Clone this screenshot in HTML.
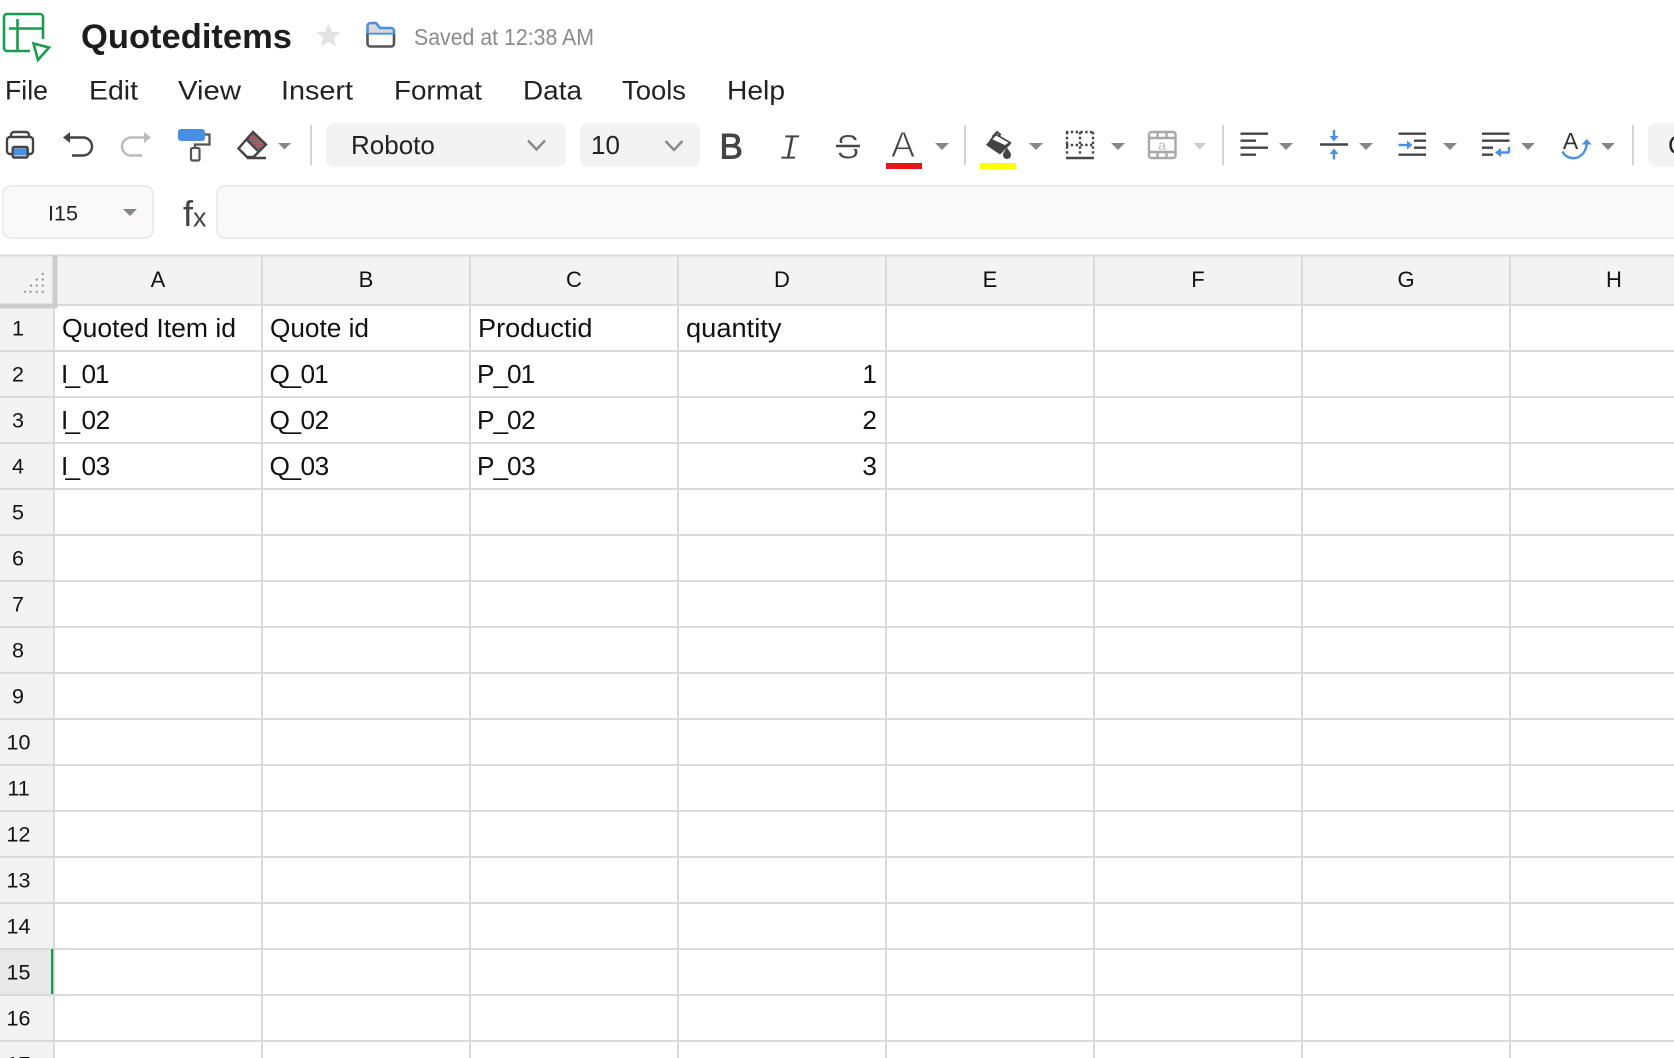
<!DOCTYPE html>
<html lang="en"><head><meta charset="utf-8"><title>Quoteditems</title>
<style>
html,body{margin:0;padding:0;background:#fff;width:1674px;height:1058px;overflow:hidden}
svg{display:block;font-family:"Liberation Sans",sans-serif}
.m{font-size:27px;fill:#222}
.h{font-size:22px;fill:#111;text-anchor:middle}
.r{font-size:21.5px;fill:#111;text-anchor:middle}
.c{font-size:26.2px;fill:#111}
.e{text-anchor:end}
.t{fill:#8b8686}
.g{fill:none;stroke:#dadada;stroke-width:2}
.i{fill:none;stroke:#444;stroke-width:2.4}
.b{fill:none;stroke:#4a90e2;stroke-width:2.4}
</style></head><body>
<svg width="1674" height="1058" viewBox="0 0 1674 1058" xmlns="http://www.w3.org/2000/svg">
<defs>
<pattern id="rd" width="3" height="3" patternUnits="userSpaceOnUse"><rect width="3" height="3" fill="#777"/><rect width="1.4" height="1.4" fill="#f0202a"/></pattern>
</defs>
<!-- logo -->
<g fill="none" stroke="#1a9c4f" stroke-width="2.6">
<path d="M30 51H7a3 3 0 0 1-3-3V17a3 3 0 0 1 3-3H40a3 3 0 0 1 3 3V39"/>
<path d="M9 28.5H43M17.5 19V51"/>
<path d="M33.5 43.5L49 47.5L38 60Z"/>
</g>
<text x="81" y="48" font-size="34.5" font-weight="700" fill="#1d1d1d" textLength="211" lengthAdjust="spacingAndGlyphs">Quoteditems</text>
<polygon points="328.5,23 331.7,31.6 340.9,32 333.7,37.7 336.1,46.5 328.5,41.5 320.9,46.5 323.3,37.7 316.1,32 325.3,31.6" fill="#e2e2e2"/>
<!-- folder -->
<path d="M367.5 34V26a3 3 0 0 1 3-3H376l4 5H391a3 3 0 0 1 3 3V34Z" fill="#d9d9d9" stroke="#4a90e2" stroke-width="2.6"/>
<rect x="369" y="34.5" width="23.5" height="10.5" fill="#fff"/>
<path d="M367.5 33.5V43.5a3 3 0 0 0 3 3H391a3 3 0 0 0 3-3V33.5" fill="none" stroke="#555" stroke-width="2.6"/>
<path d="M368 34H394" stroke="#4a90e2" stroke-width="1.5" stroke-dasharray="2 1.5"/>
<text x="414" y="45" font-size="23" fill="#8a8a8a" textLength="180" lengthAdjust="spacingAndGlyphs">Saved at 12:38 AM</text>
<!-- menu -->
<text class="m" x="5" y="99.5" textLength="43" lengthAdjust="spacingAndGlyphs">File</text>
<text class="m" x="89" y="99.5" textLength="49" lengthAdjust="spacingAndGlyphs">Edit</text>
<text class="m" x="178" y="99.5" textLength="63" lengthAdjust="spacingAndGlyphs">View</text>
<text class="m" x="281" y="99.5" textLength="72" lengthAdjust="spacingAndGlyphs">Insert</text>
<text class="m" x="394" y="99.5" textLength="88" lengthAdjust="spacingAndGlyphs">Format</text>
<text class="m" x="523" y="99.5" textLength="59" lengthAdjust="spacingAndGlyphs">Data</text>
<text class="m" x="622" y="99.5" textLength="64" lengthAdjust="spacingAndGlyphs">Tools</text>
<text class="m" x="727" y="99.5" textLength="58" lengthAdjust="spacingAndGlyphs">Help</text>
<!-- print -->
<g class="i"><path d="M11 137V135a3 3 0 0 1 3-3H26a3 3 0 0 1 3 3V137"/><path d="M12 154H10a3 3 0 0 1-3-3V140a3 3 0 0 1 3-3H30a3 3 0 0 1 3 3V151a3 3 0 0 1-3 3H28"/><rect x="12.7" y="147" width="15" height="10.5" rx="1.5"/></g>
<rect x="14" y="148.5" width="12.5" height="7" fill="#4a90e2"/>
<!-- undo / redo -->
<path d="M69 137.5H83a9 9 0 0 1 0 18H72" class="i"/><polygon points="63,137.5 70,132 70,143" fill="#444"/>
<path d="M145 137.5H131a9 9 0 0 0 0 18H142" fill="none" stroke="#bbb" stroke-width="2.4"/><polygon points="151,137.5 144,132 144,143" fill="#bbb"/>
<!-- roller -->
<rect x="178" y="129" width="27" height="12" rx="3" fill="#4a90e2"/>
<path d="M205 134.5H209.5V144.5H195V148" fill="none" stroke="#555" stroke-width="2.2"/>
<rect x="191" y="148" width="8.5" height="12.5" rx="1.5" fill="none" stroke="#555" stroke-width="2.2"/>
<!-- eraser -->
<path d="M253 132L266 144.5L259 152L246 139Z" fill="url(#rd)"/>
<path d="M253 132L266 144.5L253.5 157H247L238.5 148.5ZM246 139L259 152M247 158H266" class="i"/>
<polygon class="t" points="278,143 291,143 284.5,149.5"/>
<rect x="310" y="125" width="2" height="40" fill="#d4d4d4"/>
<!-- font pills -->
<rect x="326" y="123" width="240" height="44" rx="8" fill="#f3f3f3"/>
<text x="351" y="154" font-size="26" fill="#222">Roboto</text>
<path d="M528 140.5L536.5 149.5L545 140.5" fill="none" stroke="#888" stroke-width="2.4"/>
<rect x="580" y="123" width="120" height="44" rx="8" fill="#f3f3f3"/>
<text x="591" y="154" font-size="26" fill="#222">10</text>
<path d="M665.5 141L674 150L682.5 141" fill="none" stroke="#888" stroke-width="2.4"/>
<!-- B I S A -->
<text x="719.5" y="158.5" font-size="35" fill="#444" stroke="#444" stroke-width=".9">B</text>
<text x="779" y="159" font-size="36" fill="#444" font-family="Liberation Mono" font-style="italic" stroke="#fff" stroke-width=".7">I</text>
<text x="848" y="158.5" font-size="34" fill="#444" text-anchor="middle" stroke="#fff" stroke-width=".6">S</text>
<rect x="834" y="143" width="28" height="6" fill="#fff"/>
<path d="M836 146H860" class="i"/>
<text x="903" y="157" font-size="36" fill="#444" text-anchor="middle" stroke="#fff" stroke-width="1">A</text>
<rect x="886" y="163" width="36" height="6" fill="#e8141a"/>
<polygon class="t" points="935,143 949,143 942,150"/>
<rect x="964" y="125" width="2" height="40" fill="#d4d4d4"/>
<!-- bucket -->
<path d="M992.3 137L997 132L1000 134.5L996.5 140" fill="none" stroke="#444" stroke-width="2"/>
<path d="M992.5 137L1011.5 143.5L1000 154.5L986 145Z" fill="#444"/>
<path d="M991 139.5L996 134.5L1010 142.5L1005 146Z" fill="#fff" stroke="#444" stroke-width="1.6"/>
<path d="M1007 147.5C1008 150 1011 152 1011 155a4 4 0 0 1-8 0C1003 152 1006 150 1007 147.5Z" fill="#444"/>
<rect x="980" y="163" width="36" height="6" fill="#ff0"/>
<polygon class="t" points="1029,143 1043,143 1036,150"/>
<!-- borders -->
<g fill="none" stroke="#444" stroke-width="2.4" stroke-dasharray="2.4 2.4">
<path d="M1066 132H1094M1066 145H1094M1067 132V156M1080 132V156M1093 132V156"/>
</g>
<path d="M1066 158H1094" stroke="#444" stroke-width="2.6"/>
<polygon class="t" points="1111,143 1125,143 1118,150"/>
<!-- merge -->
<g fill="none" stroke="#a8a8a8" stroke-width="2.4">
<rect x="1149" y="132" width="26.5" height="26" rx="2.5"/>
<path d="M1149 138H1175.5M1149 152H1175.5M1157.5 132V138M1166.5 132V138M1157.5 152V158M1166.5 152V158"/>
</g>
<text x="1162" y="150" font-size="14" fill="#bbb" text-anchor="middle">a</text>
<polygon points="1193.5,143 1206,143 1199.7,149.5" fill="#ccc"/>
<rect x="1222" y="125" width="2" height="40" fill="#d4d4d4"/>
<!-- align -->
<path d="M1240.5 133.7H1268M1240.5 140.7H1256M1240.5 147.7H1268M1240.5 154.7H1256" class="i"/>
<polygon class="t" points="1279,143 1293,143 1286,150"/>
<!-- valign -->
<path d="M1320 144.5H1348" class="i"/>
<path d="M1334 130V137M1334 154V159.5" class="b"/>
<polygon points="1329.5,136 1338.5,136 1334,141.5" fill="#4a90e2"/><polygon points="1329.5,154 1338.5,154 1334,148.5" fill="#4a90e2"/>
<polygon class="t" points="1359,143 1373,143 1366,150"/>
<!-- indent -->
<path d="M1398.5 133.7H1426M1414 140.7H1426M1414 147.7H1426M1398.5 154.7H1426" class="i"/>
<path d="M1398.5 145H1408" class="b"/><polygon points="1407,140.5 1407,149.5 1412.5,145" fill="#4a90e2"/>
<polygon class="t" points="1443,143 1457,143 1450,150"/>
<!-- wrap -->
<path d="M1482 133.7H1509.5M1482 140.7H1509.5M1482 147.7H1493M1482 154.7H1493" class="i"/>
<path d="M1509 147V151.5a1 1 0 0 1-1 1H1500" class="b"/><polygon points="1501,148 1501,157 1495,152.5" fill="#4a90e2"/>
<polygon class="t" points="1521,143 1535,143 1528,150"/>
<!-- rotate -->
<text x="1570.5" y="149" font-size="23" fill="#333" text-anchor="middle">A</text>
<path d="M1562.5 151.5C1567 161.5 1585 161.5 1587 143" class="b"/>
<polygon points="1586.7,139 1581.7,144.5 1591.7,144.5" fill="#4a90e2"/>
<polygon class="t" points="1601,143 1615,143 1608,150"/>
<rect x="1632" y="125" width="2" height="40" fill="#d4d4d4"/>
<rect x="1648" y="123" width="40" height="44" rx="8" fill="#f3f3f3"/>
<text x="1668" y="154" font-size="26" fill="#222">C</text>
<!-- formula bar -->
<rect x="3" y="186" width="150" height="52" rx="8" fill="#f9f9f9" stroke="#ebebeb" stroke-width="2"/>
<text x="48" y="220.5" font-size="21" fill="#222" textLength="30" lengthAdjust="spacingAndGlyphs">I15</text>
<polygon class="t" points="123,209 137,209 130,216"/>
<text x="183" y="226" font-size="36" fill="#444">f</text>
<text x="193" y="226.5" font-size="27" fill="#444">x</text>
<rect x="217" y="186" width="1480" height="52" rx="8" fill="#f9f9f9" stroke="#ebebeb" stroke-width="2"/>
<!-- headers bg -->
<rect x="0" y="255" width="1674" height="50" fill="#f3f3f3"/>
<rect x="0" y="305" width="53" height="753" fill="#f3f3f3"/>
<rect x="0" y="950" width="51" height="44" fill="#e9e9e9"/>
<!-- grid -->
<path class="g" d="M0 255.5H1674M0 305H1674M0 351H1674M0 397H1674M0 443H1674M0 489H1674M0 535H1674M0 581H1674M0 627H1674M0 673H1674M0 719H1674M0 765H1674M0 811H1674M0 857H1674M0 903H1674M0 949H1674M0 995H1674M0 1041H1674"/>
<path class="g" d="M54 305V1058M262 255V1058M470 255V1058M678 255V1058M886 255V1058M1094 255V1058M1302 255V1058M1510 255V1058"/>
<!-- freeze -->
<rect x="52.5" y="255" width="5" height="53" fill="#cdcdcd"/>
<rect x="0" y="303.5" width="57" height="5" fill="#cdcdcd"/>
<g fill="#8f8f8f">
<circle cx="25" cy="291.7" r="1.1"/><circle cx="30.5" cy="291.7" r="1.1"/><circle cx="36.7" cy="291.7" r="1.1"/><circle cx="42.7" cy="291.7" r="1.1"/>
<circle cx="31" cy="285.5" r="1.1"/><circle cx="36.7" cy="285.5" r="1.1"/><circle cx="42.7" cy="285.5" r="1.1"/>
<circle cx="36.7" cy="279.5" r="1.1"/><circle cx="42.7" cy="279.5" r="1.1"/>
<circle cx="42.7" cy="274" r="1.1"/>
</g>
<rect x="51" y="949" width="2.2" height="45" fill="#129a4f"/>
<!-- col labels -->
<text class="h" x="158" y="287">A</text><text class="h" x="366" y="287">B</text><text class="h" x="574" y="287">C</text><text class="h" x="782" y="287">D</text><text class="h" x="990" y="287">E</text><text class="h" x="1198" y="287">F</text><text class="h" x="1406" y="287">G</text><text class="h" x="1614" y="287">H</text>
<!-- row labels -->
<text class="r" x="18" y="335.5">1</text><text class="r" x="18" y="381.5">2</text><text class="r" x="18" y="427.5">3</text><text class="r" x="18" y="473.5">4</text><text class="r" x="18" y="519.5">5</text><text class="r" x="18" y="565.5">6</text><text class="r" x="18" y="611.5">7</text><text class="r" x="18" y="657.5">8</text><text class="r" x="18" y="703.5">9</text><text class="r" x="18.5" y="749.5">10</text><text class="r" x="18.5" y="795.5">11</text><text class="r" x="18.5" y="841.5">12</text><text class="r" x="18.5" y="887.5">13</text><text class="r" x="18.5" y="933.5">14</text><text class="r" x="18.5" y="979.5">15</text><text class="r" x="18.5" y="1025.5">16</text><text class="r" x="18.5" y="1071.5">17</text>
<!-- cells -->
<text class="c" x="62" y="337" textLength="174" lengthAdjust="spacingAndGlyphs">Quoted Item id</text><text class="c" x="270" y="337">Quote id</text><text class="c" x="478" y="337" textLength="114.5" lengthAdjust="spacingAndGlyphs">Productid</text><text class="c" x="686" y="337" textLength="95.5" lengthAdjust="spacingAndGlyphs">quantity</text>
<text class="c" y="383"><tspan x="61">I</tspan><tspan x="65.5">_</tspan><tspan x="81.5" letter-spacing="-1.2">01</tspan></text><text class="c" y="383"><tspan x="269.5">Q</tspan><tspan x="286.5">_</tspan><tspan x="300.5" letter-spacing="-1">01</tspan></text><text class="c" y="383"><tspan x="477">P</tspan><tspan x="493.5">_</tspan><tspan x="507" letter-spacing="-1">01</tspan></text><text class="c e" x="877" y="383">1</text>
<text class="c" y="429"><tspan x="61">I</tspan><tspan x="65.5">_</tspan><tspan x="81.5" letter-spacing="-.4">02</tspan></text><text class="c" y="429"><tspan x="269.5">Q</tspan><tspan x="286.5">_</tspan><tspan x="300.5" letter-spacing="-.4">02</tspan></text><text class="c" y="429"><tspan x="477">P</tspan><tspan x="493.5">_</tspan><tspan x="507" letter-spacing="-.4">02</tspan></text><text class="c e" x="877" y="429">2</text>
<text class="c" y="475"><tspan x="61">I</tspan><tspan x="65.5">_</tspan><tspan x="81.5" letter-spacing="-.4">03</tspan></text><text class="c" y="475"><tspan x="269.5">Q</tspan><tspan x="286.5">_</tspan><tspan x="300.5" letter-spacing="-.4">03</tspan></text><text class="c" y="475"><tspan x="477">P</tspan><tspan x="493.5">_</tspan><tspan x="507" letter-spacing="-.4">03</tspan></text><text class="c e" x="877" y="475">3</text>
</svg>
</body></html>
